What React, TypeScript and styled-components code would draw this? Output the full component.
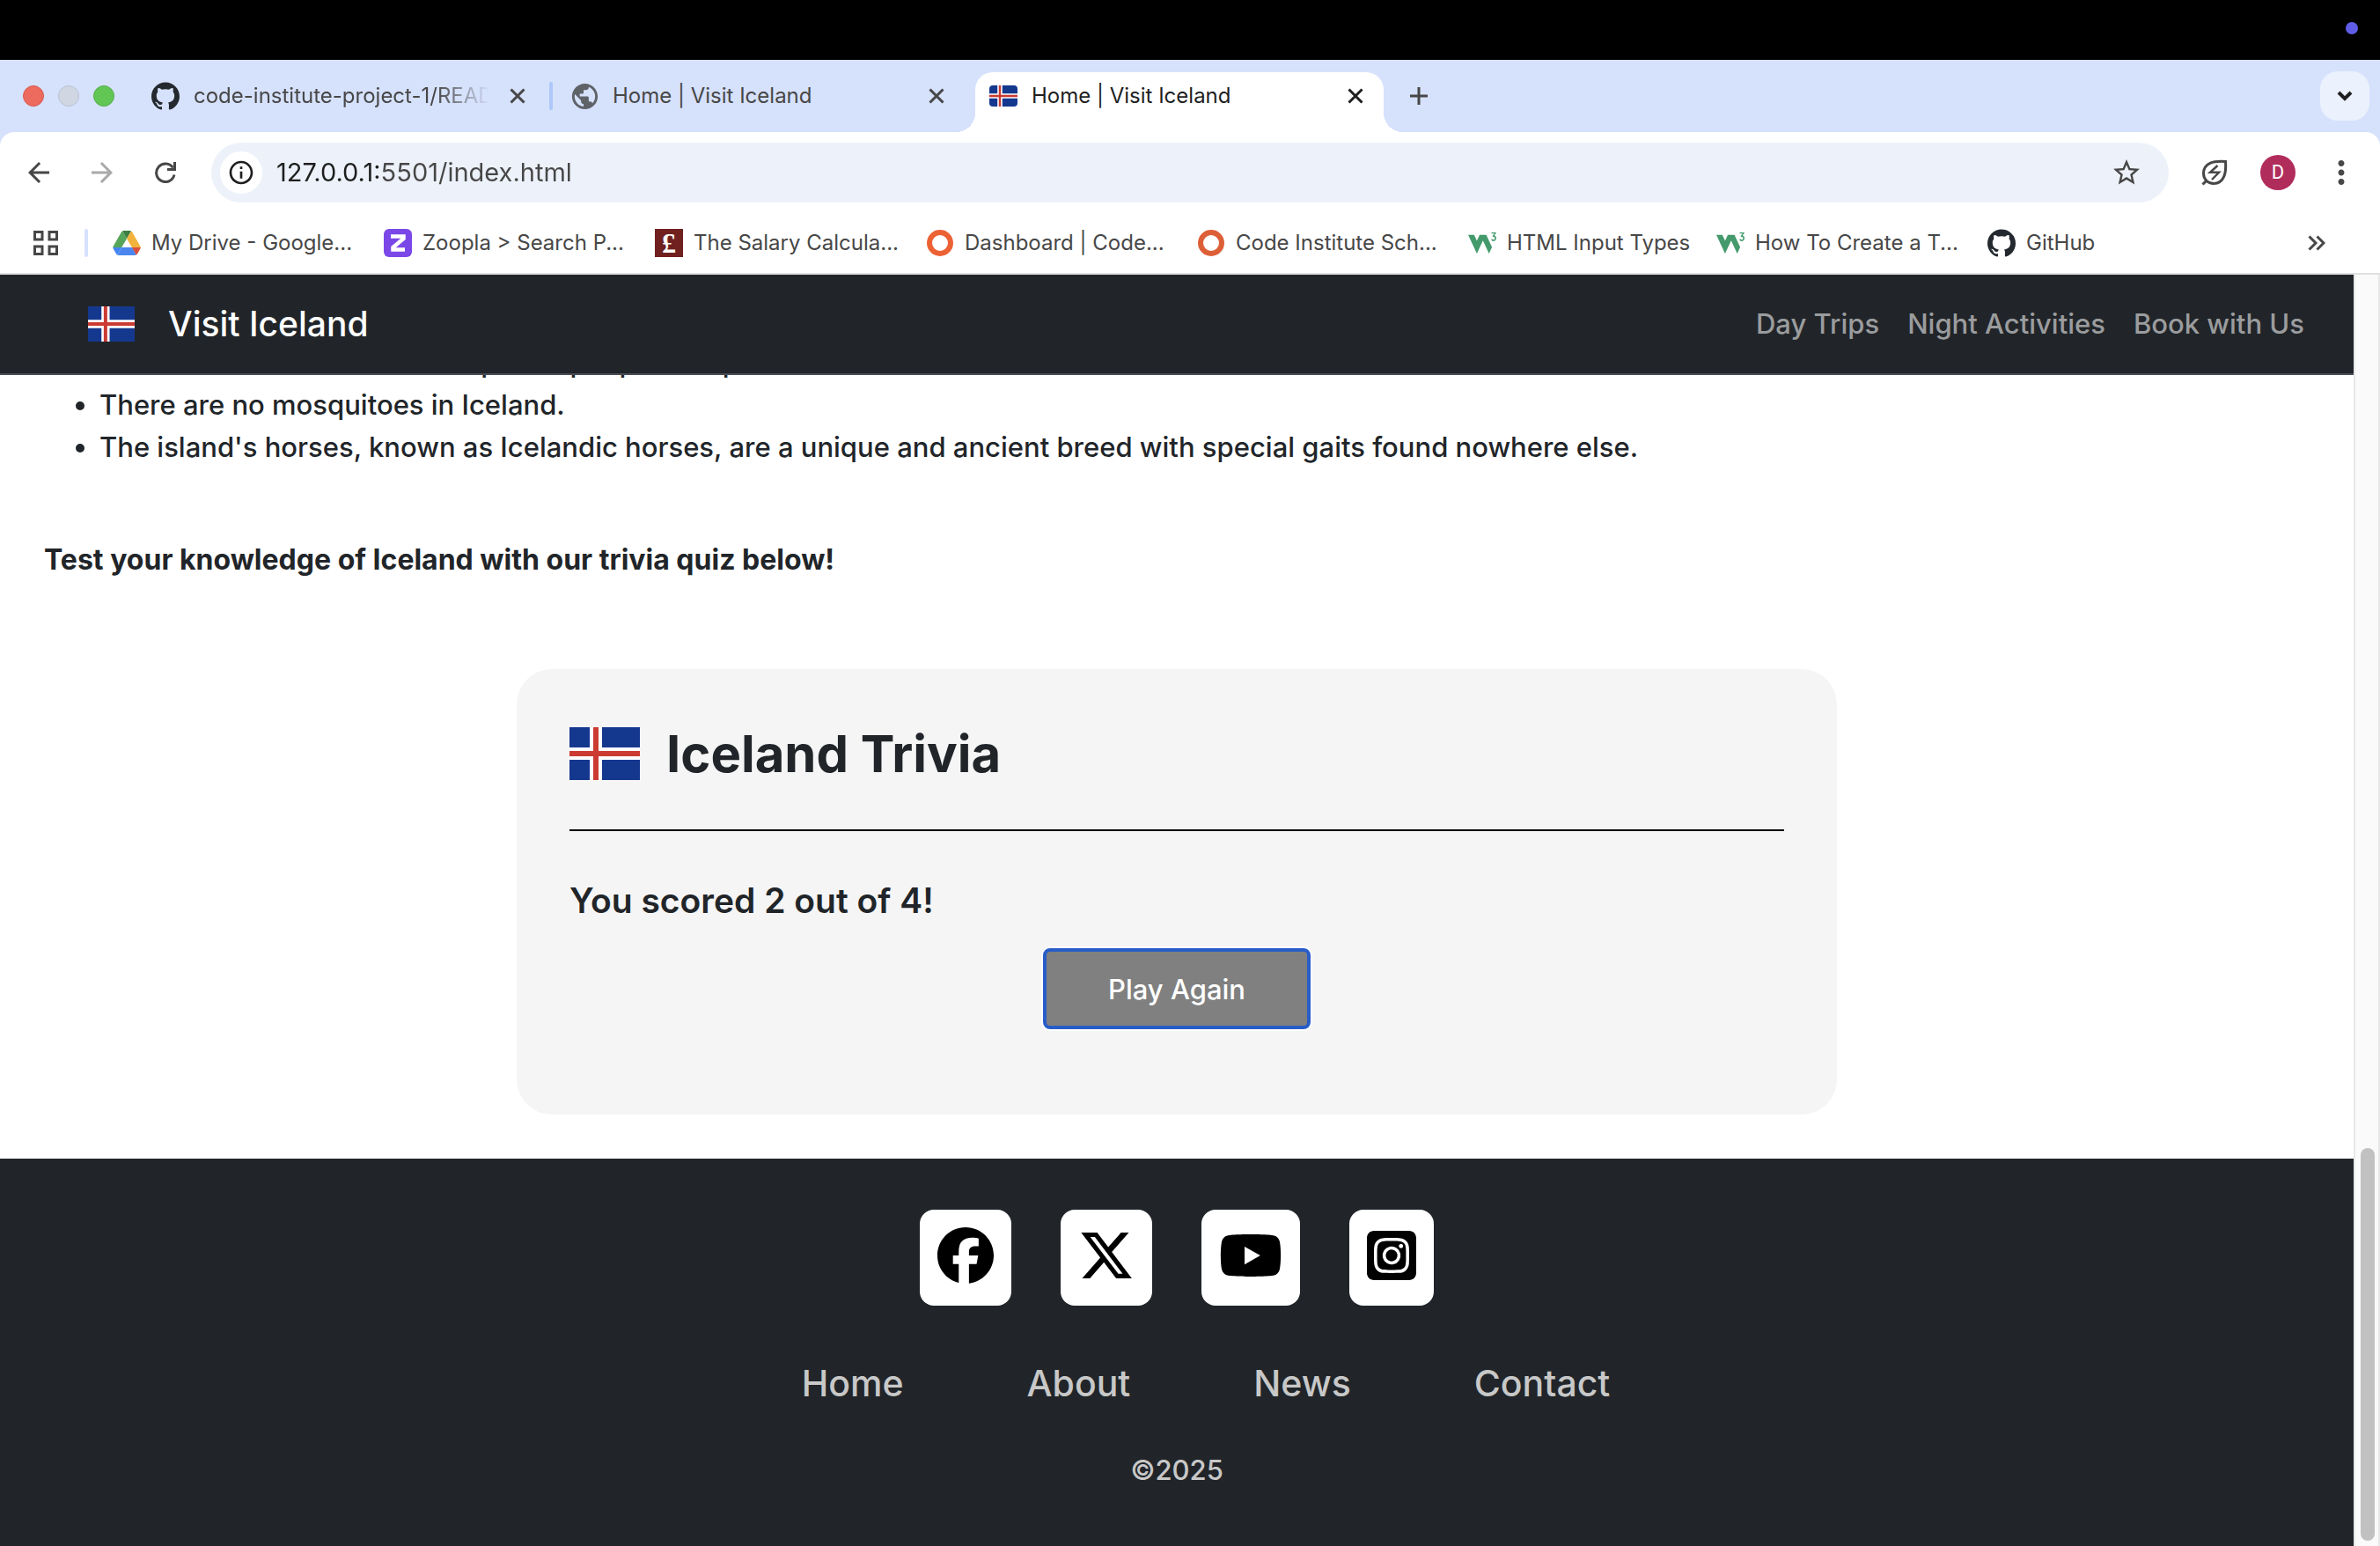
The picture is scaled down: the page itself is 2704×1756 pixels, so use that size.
import React from "react";
import styled, { createGlobalStyle, css } from "styled-components";
import {
  MdArrowBack,
  MdArrowForward,
  MdMoreVert,
  MdOutlineInfo,
  MdPublic,
  MdStarBorder,
} from "react-icons/md";
import { SiGithub, SiW3Schools } from "react-icons/si";
import { FaFacebook, FaSquareInstagram, FaXTwitter, FaYoutube } from "react-icons/fa6";

const color = {
  strip: "#d6e1fc",
  stripLine: "#aec8fa",
  ink: "#1f1f1f",
  chrome: "#474747",
  field: "#edf2fa",
  dark: "#212529",
  line: "#dfe1e1",
};

const GlobalStyle = createGlobalStyle`
  *, *::before, *::after { box-sizing: border-box; }
  body {
    margin: 0;
    background: #fff;
    color: ${color.dark};
    font-family: Inter, "Liberation Sans", sans-serif;
  }
  button { border: 0; padding: 0; background: none; color: inherit; font: inherit; cursor: pointer; }
  a { color: inherit; text-decoration: none; }
  svg { display: block; flex: none; }
`;

const Screen = styled.div`
  display: flex;
  flex-direction: column;
  height: 100vh;
  overflow: hidden;
`;

/* ---------- window chrome ---------- */

const MenuBar = styled.div`
  display: flex;
  flex: none;
  justify-content: flex-end;
  height: 68px;
  padding: 25px 25px 0 0;
  background: #000;
`;

const CameraDot = styled.span`
  width: 14px;
  height: 14px;
  border-radius: 50%;
  background: #5f5de8;
`;

const TabStrip = styled.div`
  display: flex;
  flex: none;
  align-items: center;
  height: 82px;
  padding: 14px 12px 14px 26px;
  background: ${color.strip};
  color: ${color.chrome};
`;

const Lights = styled.div`
  display: flex;
  gap: 16px;
  margin-right: 26px;
`;

const Light = styled.span<{ $fill: string; $edge: string }>`
  width: 24px;
  height: 24px;
  border: 1px solid ${(p) => p.$edge};
  border-radius: 50%;
  background: ${(p) => p.$fill};
`;

const Tab = styled.div<{ $active?: boolean }>`
  position: relative;
  display: flex;
  align-items: center;
  align-self: stretch;
  gap: 16px;
  width: 464px;
  padding: 0 16px;

  ${(p) =>
    p.$active &&
    css`
      margin-bottom: -14px;
      padding-bottom: 14px;
      border-radius: 20px 20px 0 0;
      background: #fff;
      color: ${color.ink};

      &::before,
      &::after {
        content: "";
        position: absolute;
        bottom: 0;
        width: 22px;
        height: 22px;
      }
      &::before {
        right: 100%;
        background: radial-gradient(circle at 0 0, transparent 22px, #fff 22px);
      }
      &::after {
        left: 100%;
        background: radial-gradient(circle at 100% 0, transparent 22px, #fff 22px);
      }
    `}
`;

const TabIcon = styled.span`
  display: flex;
  flex: none;
  justify-content: center;
  width: 32px;
`;

const TabTitle = styled.span<{ $fade?: boolean }>`
  flex: 1;
  overflow: hidden;
  font-size: 24px;
  line-height: 32px;
  white-space: nowrap;
  ${(p) => p.$fade && css`mask-image: linear-gradient(to right, #000 82%, transparent);`}
`;

const TabDivider = styled.span<{ $visible?: boolean }>`
  width: 4px;
  height: 32px;
  margin: 0 4px;
  border-radius: 2px;
  background: ${(p) => (p.$visible ? color.stripLine : "transparent")};
`;

const IconButton = styled.button<{ $width: number; $dim?: boolean }>`
  display: flex;
  flex: none;
  align-items: center;
  justify-content: center;
  width: ${(p) => p.$width}px;
  height: 32px;
  color: ${(p) => (p.$dim ? "#a9a9a9" : "inherit")};
`;

const NewTab = styled(IconButton)`
  margin-left: 20px;
`;

const TabSearch = styled(IconButton)`
  height: 56px;
  margin-left: auto;
  border-radius: 20px;
  background: #ebf2fd;
  color: ${color.ink};
`;

const ToolbarBack = styled.div`
  flex: none;
  background: ${color.strip};
`;

const Toolbar = styled.div`
  display: flex;
  align-items: center;
  padding: 12px 8px;
  border-radius: 16px 16px 0 0;
  background: #fff;
  color: ${color.chrome};
`;

const AddressBar = styled.form`
  display: flex;
  flex: 1;
  align-items: center;
  gap: 16px;
  height: 68px;
  margin: 0 16px;
  padding: 0 24px 0 10px;
  border-radius: 34px;
  background: ${color.field};
`;

const SiteInfo = styled(IconButton)`
  height: 48px;
  border-radius: 50%;
  background: #fff;
  color: ${color.ink};
`;

const Address = styled.input`
  flex: 1;
  min-width: 0;
  padding: 0;
  border: 0;
  outline: 0;
  background: linear-gradient(to right, ${color.ink} 116px, ${color.chrome} 116px);
  background-clip: text;
  color: ${color.chrome};
  font: 29px/40px Inter, "Liberation Sans", sans-serif;
  -webkit-text-fill-color: transparent;
`;

const Avatar = styled.span`
  display: flex;
  align-items: center;
  justify-content: center;
  width: 40px;
  height: 40px;
  border-radius: 50%;
  background: #b02c5b;
  color: #fff;
  font: 22px/40px Roboto, sans-serif;
`;

const Bookmarks = styled.nav`
  display: flex;
  flex: none;
  align-items: center;
  height: 70px;
  padding: 0 52px 0 34px;
  border-bottom: 2px solid ${color.line};
  color: ${color.chrome};
`;

const BookmarkDivider = styled.span`
  width: 4px;
  height: 32px;
  margin: 0 28px 0 26px;
  border-radius: 2px;
  background: ${color.strip};
`;

const Bookmark = styled.a<{ $width: number }>`
  display: flex;
  flex: none;
  align-items: center;
  gap: 12px;
  width: ${(p) => p.$width}px;
  font-size: 24px;
  line-height: 32px;
  white-space: nowrap;
`;

const Overflow = styled(IconButton)`
  margin-left: auto;
`;

/* ---------- page ---------- */

const Viewport = styled.div`
  display: flex;
  flex: 1;
  min-height: 0;
`;

const Page = styled.div`
  display: flex;
  flex: 1;
  flex-direction: column;
  min-width: 0;
  font-weight: 450;
`;

const ScrollTrack = styled.div`
  display: flex;
  flex: none;
  align-items: flex-end;
  width: 30px;
  padding: 0 4px 6px 6px;
  border: solid #e8e8e8;
  border-width: 0 2px;
  background: #fafafa;
`;

const ScrollThumb = styled.div`
  width: 16px;
  height: 31%;
  border-radius: 8px;
  background: #c1c1c1;
`;

const NavBar = styled.header`
  z-index: 1;
  display: flex;
  flex: none;
  align-items: center;
  justify-content: space-between;
  height: 114px;
  padding: 0 56px 0 100px;
  border-bottom: 2px solid #494c54;
  background: ${color.dark};
`;

const Brand = styled.a`
  display: flex;
  align-items: center;
  gap: 38px;
  color: #fff;
  font-size: 39px;
  line-height: 60px;
`;

const NavLinks = styled.nav`
  display: flex;
  gap: 32px;
  color: #9b9c9e;
  font-size: 31px;
  line-height: 48px;
`;

const Facts = styled.ul`
  margin: -38px 50px 0;
  padding-left: 63px;
  font-size: 31px;
  line-height: 48px;
`;

const Invite = styled.p`
  margin: 80px 50px 100px;
  font-size: 32px;
  font-weight: 750;
  line-height: 48px;
`;

const Card = styled.section`
  display: flex;
  flex-direction: column;
  width: 100%;
  max-width: 1500px;
  margin: 0 auto 50px;
  padding: 60px;
  border-radius: 40px;
  background: #f5f5f5;
`;

const CardTitle = styled.h2`
  display: flex;
  align-items: center;
  gap: 30px;
  margin: 0;
  padding-bottom: 50px;
  border-bottom: 2px solid #000;
  font-size: 58px;
  font-weight: 650;
  line-height: 72px;
`;

const Score = styled.h3`
  margin: 55px 0 30px;
  font-size: 39px;
  font-weight: 600;
  line-height: 48px;
`;

const PlayAgain = styled.button`
  align-self: center;
  width: 304px;
  height: 92px;
  margin-bottom: 37px;
  border: 4px solid #285dc8;
  border-radius: 8px;
  background: #808080;
  box-shadow: 0 0 0 2px #fff;
  color: #fff;
  font-size: 31px;
`;

const Footer = styled.footer`
  display: flex;
  flex: 1;
  flex-direction: column;
  align-items: center;
  padding-top: 58px;
  background: ${color.dark};
  color: #c8c8c8;
`;

const Socials = styled.div`
  display: flex;
  gap: 56px;
`;

const Social = styled.a<{ $width: number }>`
  padding: 20px 20px 25px;
  border-radius: 16px;
  background: #fff;
  color: #000;

  svg {
    width: ${(p) => p.$width}px;
    height: 64px;
  }
`;

const FooterLinks = styled.nav`
  display: flex;
  gap: 140px;
  margin-top: 58px;
  padding-left: 66px;
  font-size: 41px;
  line-height: 60px;
`;

const Copyright = styled.p`
  margin: 45px 0 0;
  font-size: 31px;
  line-height: 48px;
`;

/* ---------- drawings ---------- */

const FlagSvg = styled.svg<{ $round?: boolean }>`
  border-radius: ${(p) => (p.$round ? 4 : 0)}px;
`;

const Flag = ({ width, height, round }: { width: number; height: number; round?: boolean }) => (
  <FlagSvg $round={round} width={width} height={height} viewBox="0 0 80 60" preserveAspectRatio="none" aria-hidden="true">
    <path fill="#15388f" d="M0 0h80v60H0z" />
    <path fill="#fff" d="M23 0h14v60H23zM0 23h80v14H0z" />
    <path fill="#cb3b32" d="M27 0h6v60h-6zM0 27h80v6H0z" />
  </FlagSvg>
);

const Close = () => (
  <svg width="20" height="20" viewBox="0 0 20 20" stroke="currentColor" strokeWidth="3" aria-hidden="true">
    <path d="M2.5 2.5l15 15M17.5 2.5l-15 15" />
  </svg>
);

const Plus = () => (
  <svg width="22" height="22" viewBox="0 0 22 22" stroke="currentColor" strokeWidth="3" aria-hidden="true">
    <path d="M11 1v20M1 11h20" />
  </svg>
);

const Reload = () => (
  <svg width="24" height="24" viewBox="0 0 24 24" fill="none" stroke="currentColor" strokeWidth="3" aria-hidden="true">
    <path d="M22 14.500A10.300 10.300 0 1 1 20.500 6.500M22.500 0v8.500H14" />
  </svg>
);

const EnergyLeaf = () => (
  <svg width="30" height="30" viewBox="0 0 30 30" fill="none" stroke="currentColor" strokeWidth="3" aria-hidden="true">
    <path d="M27.500 2.500C14 1.500 2.500 4 2.500 16c0 6.500 5 11.500 11.500 11.500C26 27.500 28.500 15 27.500 2.500z" />
    <path d="M1.500 28.500L6 24" />
    <path d="M18.500 7l-8.500 7.800h10L12 23" strokeWidth="2.500" />
  </svg>
);

const ChevronDown = () => (
  <svg width="20" height="14" viewBox="0 0 20 14" fill="none" stroke="currentColor" strokeWidth="4" aria-hidden="true">
    <path d="M3 3l7 7 7-7" />
  </svg>
);

const Chevrons = () => (
  <svg width="20" height="18" viewBox="0 0 20 18" fill="none" stroke="currentColor" strokeWidth="3" aria-hidden="true">
    <path d="M1.500 1.500L9 9l-7.500 7.500M10.500 1.500L18 9l-7.500 7.500" />
  </svg>
);

const GridIcon = () => (
  <svg width="30" height="30" viewBox="0 0 30 30" fill="none" stroke="currentColor" strokeWidth="3" aria-hidden="true">
    <path d="M2.500 2.500h8.500v8.500H2.500zM19 2.500h8.500v8.500H19zM2.500 19h8.500v8.500H2.500zM19 19h8.500v8.500H19z" />
  </svg>
);

const Drive = () => (
  <svg width="32" height="28" viewBox="0 0 87 78" aria-hidden="true">
    <path fill="#4384f3" d="M6.600 66.850l3.850 6.650c.8 1.400 1.950 2.500 3.300 3.300L27.500 53H0c0 1.550.4 3.100 1.200 4.500z" />
    <path fill="#57a55a" d="M43.650 25L29.900 1.200c-1.350.8-2.500 1.900-3.300 3.300L1.200 48.500A9.060 9.060 0 0 0 0 53h27.500z" />
    <path fill="#d94f3d" d="M73.550 76.800c1.350-.8 2.500-1.900 3.300-3.300l1.600-2.750L86.100 57.500c.8-1.400 1.200-2.950 1.200-4.500H59.800l5.850 11.500z" />
    <path fill="#3b7f42" d="M43.650 25L57.400 1.200C56.050.4 54.500 0 52.900 0H34.400c-1.600 0-3.150.45-4.500 1.200z" />
    <path fill="#4a86ee" d="M59.800 53H27.500L13.750 76.800c1.350.8 2.900 1.200 4.500 1.200h50.800c1.600 0 3.150-.45 4.500-1.200z" />
    <path fill="#f2b33d" d="M73.400 26.500l-12.700-22c-.8-1.400-1.950-2.500-3.300-3.300L43.650 25 59.800 53h27.450c0-1.550-.4-3.100-1.200-4.500z" />
  </svg>
);

const Zoopla = () => (
  <svg width="32" height="32" viewBox="0 0 32 32" aria-hidden="true">
    <rect width="32" height="32" rx="6" fill="#7b48e8" />
    <path d="M8 8.500h14.500v2.500L10.500 21v2.500H24" fill="none" stroke="#fff" strokeWidth="4.500" />
  </svg>
);

const PoundBox = styled.span`
  display: flex;
  flex: none;
  justify-content: center;
  width: 32px;
  height: 32px;
  background: #70201e;
  color: #fff;
  font: bold 32px/32px "Liberation Serif", serif;
`;

const Ring = ({ stroke }: { stroke: string }) => (
  <svg width="32" height="32" viewBox="0 0 32 32" fill="none" stroke={stroke} strokeWidth="6" aria-hidden="true">
    <circle cx="16" cy="16" r="12" />
  </svg>
);

const W3Mark = styled(SiW3Schools).attrs({ viewBox: "0 1 24 15", preserveAspectRatio: "none" })`
  width: 32px;
  height: 24px;
  color: #449a6c;
`;

const bookmarks: { label: string; width: number; icon: React.ReactNode }[] = [
  { label: "My Drive - Google...", width: 308, icon: <Drive /> },
  { label: "Zoopla > Search P...", width: 308, icon: <Zoopla /> },
  { label: "The Salary Calcula...", width: 308, icon: <PoundBox aria-hidden="true">£</PoundBox> },
  { label: "Dashboard | Code...", width: 308, icon: <Ring stroke="#ec6235" /> },
  { label: "Code Institute Sch...", width: 308, icon: <Ring stroke="#dd5f38" /> },
  { label: "HTML Input Types", width: 282, icon: <W3Mark /> },
  { label: "How To Create a T...", width: 308, icon: <W3Mark /> },
  { label: "GitHub", width: 130, icon: <SiGithub size={32} color="#24292f" /> },
];

const navLinks = ["Day Trips", "Night Activities", "Book with Us"];
const footerLinks = ["Home", "About", "News", "Contact"];
const socials = [
  { label: "Facebook", width: 64, icon: <FaFacebook /> },
  { label: "X", width: 64, icon: <FaXTwitter /> },
  { label: "YouTube", width: 72, icon: <FaYoutube /> },
  { label: "Instagram", width: 56, icon: <FaSquareInstagram /> },
];
const facts = [
  "Iceland is home to more sheep than people and puffins",
  "There are no mosquitoes in Iceland.",
  "The island's horses, known as Icelandic horses, are a unique and ancient breed with special gaits found nowhere else.",
];

export default function App() {
  return (
    <>
      <GlobalStyle />
      <Screen>
        <MenuBar>
          <CameraDot />
        </MenuBar>

        <TabStrip>
          <Lights>
            <Light $fill="#ed6a5e" $edge="#d65a4e" />
            <Light $fill="#d0d6e2" $edge="#b9c1d3" />
            <Light $fill="#62c655" $edge="#53ae45" />
          </Lights>
          <Tab>
            <TabIcon><SiGithub size={32} color="#24292f" /></TabIcon>
            <TabTitle $fade>code-institute-project-1/READ</TabTitle>
            <IconButton $width={32} aria-label="Close tab"><Close /></IconButton>
          </Tab>
          <TabDivider $visible />
          <Tab>
            <TabIcon><MdPublic size={35} color="#5f6368" /></TabIcon>
            <TabTitle>Home | Visit Iceland</TabTitle>
            <IconButton $width={32} aria-label="Close tab"><Close /></IconButton>
          </Tab>
          <TabDivider />
          <Tab $active>
            <TabIcon><Flag width={32} height={24} round /></TabIcon>
            <TabTitle>Home | Visit Iceland</TabTitle>
            <IconButton $width={32} aria-label="Close tab"><Close /></IconButton>
          </Tab>
          <NewTab $width={40} aria-label="New tab"><Plus /></NewTab>
          <TabSearch $width={56} aria-label="Search tabs"><ChevronDown /></TabSearch>
        </TabStrip>

        <ToolbarBack>
          <Toolbar>
            <IconButton $width={72} aria-label="Back"><MdArrowBack size={36} /></IconButton>
            <IconButton $width={72} $dim aria-label="Forward"><MdArrowForward size={36} /></IconButton>
            <IconButton $width={72} aria-label="Reload"><Reload /></IconButton>
            <AddressBar onSubmit={(e) => e.preventDefault()}>
              <SiteInfo $width={48} type="button" aria-label="Site information"><MdOutlineInfo size={32} /></SiteInfo>
              <Address aria-label="Address" defaultValue="127.0.0.1:5501/index.html" />
              <IconButton $width={48} type="button" aria-label="Bookmark this tab"><MdStarBorder size={36} /></IconButton>
            </AddressBar>
            <IconButton $width={72} aria-label="Energy saver"><EnergyLeaf /></IconButton>
            <IconButton $width={72} aria-label="Profile"><Avatar>D</Avatar></IconButton>
            <IconButton $width={72} aria-label="Menu"><MdMoreVert size={42} /></IconButton>
          </Toolbar>
        </ToolbarBack>

        <Bookmarks aria-label="Bookmarks">
          <IconButton $width={36} aria-label="Tab groups"><GridIcon /></IconButton>
          <BookmarkDivider />
          {bookmarks.map((b) => (
            <Bookmark key={b.label} href="#" $width={b.width}>
              {b.icon}
              {b.label}
            </Bookmark>
          ))}
          <Overflow $width={40} aria-label="More bookmarks"><Chevrons /></Overflow>
        </Bookmarks>

        <Viewport>
          <Page>
            <NavBar>
              <Brand href="#">
                <Flag width={53} height={40} />
                Visit Iceland
              </Brand>
              <NavLinks aria-label="Main">
                {navLinks.map((l) => <a key={l} href="#">{l}</a>)}
              </NavLinks>
            </NavBar>

            <main>
              <Facts>
                {facts.map((f) => <li key={f}>{f}</li>)}
              </Facts>
              <Invite>Test your knowledge of Iceland with our trivia quiz below!</Invite>
              <Card>
                <CardTitle>
                  <Flag width={80} height={60} />
                  Iceland Trivia
                </CardTitle>
                <Score>You scored 2 out of 4!</Score>
                <PlayAgain>Play Again</PlayAgain>
              </Card>
            </main>

            <Footer>
              <Socials>
                {socials.map((s) => (
                  <Social key={s.label} href="#" aria-label={s.label} $width={s.width}>
                    {s.icon}
                  </Social>
                ))}
              </Socials>
              <FooterLinks aria-label="Footer">
                {footerLinks.map((l) => <a key={l} href="#">{l}</a>)}
              </FooterLinks>
              <Copyright>©2025</Copyright>
            </Footer>
          </Page>
          <ScrollTrack>
            <ScrollThumb />
          </ScrollTrack>
        </Viewport>
      </Screen>
    </>
  );
}
